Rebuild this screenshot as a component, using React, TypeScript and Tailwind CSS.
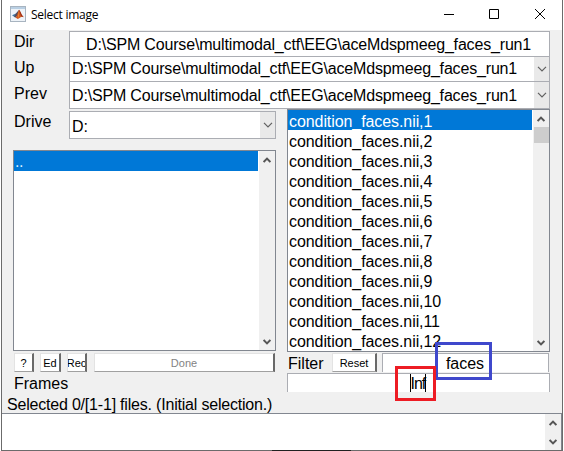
import type { ReactNode } from "react";

const path = "D:\\SPM Course\\multimodal_ctf\\EEG\\aceMdspmeeg_faces_run1";
const files = Array.from({ length: 12 }, (_, i) => `condition_faces.nii,${i + 1}`);

function ComboArrow() {
  return (
    <svg width="10" height="6" viewBox="0 0 10 6" className="block shrink-0">
      <path d="M1 .8 5 4.8 9 .8" fill="none" stroke="#606060" strokeWidth="1.2" />
    </svg>
  );
}

function ScrollArrow({ down = false }: { down?: boolean }) {
  return (
    <svg width="8" height="6" viewBox="0 0 8 6" className={`block shrink-0 ${down ? "rotate-180" : ""}`}>
      <path d="M.6 5 4 1.6 7.4 5" fill="none" stroke="#555" strokeWidth="2" />
    </svg>
  );
}

function Combo({ className, textClass, children }: { className: string; textClass: string; children: ReactNode }) {
  return (
    <div className={`flex border border-[#abadb3] bg-white ${className}`}>
      <div className={`min-w-0 flex-1 overflow-hidden whitespace-pre pl-[2px] tracking-[-0.17px] ${textClass}`}>{children}</div>
      <div className="flex w-[15px] items-center justify-center bg-[#e9e9e9]">
        <ComboArrow />
      </div>
    </div>
  );
}

function ScrollBar({ thumb = false }: { thumb?: boolean }) {
  return (
    <div className="flex w-4 shrink-0 flex-col items-center justify-between bg-[#f0f0f0] pt-[6px] pb-[5px]">
      <div className="flex w-full flex-col items-center gap-[5px]">
        <ScrollArrow />
        {thumb && <div className="h-4 w-[15px] bg-[#cdcdcd]" />}
      </div>
      <ScrollArrow down />
    </div>
  );
}

function Button({ className, children }: { className: string; children: ReactNode }) {
  return (
    <button
      className={`flex h-[19px] shrink-0 items-center justify-center overflow-hidden whitespace-nowrap border-t border-r-2 border-b border-l border-t-[#e3e3e3] border-r-[#696969] border-b-[#a0a0a0] border-l-[#e3e3e3] bg-white pt-px text-[11px] leading-none ${className}`}
    >
      {children}
    </button>
  );
}

function MatlabIcon() {
  return (
    <svg width="16" height="16" viewBox="0 0 16 16" className="block">
      <rect x=".5" y=".5" width="15" height="15" fill="#eef3f8" stroke="#a8b4c0" />
      <path d="M1 1h14v2H1z" fill="#b9cfe3" />
      <path d="M2 9.2 6 7.4 9 4 7.5 10 5.2 11.5z" fill="#3d79a8" />
      <path d="M6 7.4 9 4 8 9 5.2 11.5 4.2 10.4z" fill="#5b4a55" />
      <path d="M9 3.8C10.5 5 11.2 9 13.8 11.3 12 10.5 11 10.8 10 11.8L7.8 13 5.4 11.5C7.5 10.5 7.6 6.5 9 3.8z" fill="#d45b20" />
      <path d="M9 3.8C10.5 5 11.2 9 13.8 11.3L11 10.2z" fill="#9c2c18" />
      <path d="M9 5v5l-1 2z" fill="#f4a13a" />
    </svg>
  );
}

export default function App() {
  return (
    <div className="relative h-[451px] w-[564px] overflow-hidden bg-white pl-px font-['Liberation_Sans',Arial,sans-serif] text-[16px] leading-[20px] text-black">
      <div className="flex h-[451px] w-[562px] flex-col border-r border-b border-l border-[#6b6b6b] bg-[#f0f0f0]">
        <header className="flex h-[30px] shrink-0 bg-white">
          <div className="pt-[6px] pl-2">
            <MatlabIcon />
          </div>
          <div className="pt-[5px] pl-[5px] font-['Open_Sans','Noto_Sans',sans-serif] text-[12px] leading-[19px] tracking-[-0.25px]">Select image</div>
          <svg width="103" height="12" viewBox="0 0 103 12" className="mt-2 mr-[16px] ml-auto" fill="none" stroke="#000">
            <path d="M1 6.5h10M46.5 1.5h9v9h-9zM92 1l10 10M102 1 92 11" />
          </svg>
        </header>

        <div className="flex h-[77px] shrink-0 pt-px pl-3">
          <div className="w-[55px] shrink-0 pt-px">
            <div className="h-[26px]">Dir</div>
            <div className="h-[26px]">Up</div>
            <div className="h-[26px]">Prev</div>
          </div>
          <div className="w-[481px] shrink-0">
            <div className="h-[25px] whitespace-pre border border-b-0 border-[#abadb3] bg-white pt-[3px] pl-4 tracking-[-0.17px]">{path}</div>
            <Combo className="h-[25px] border-b-0" textClass="pt-[2px]">{path}</Combo>
            <Combo className="h-[28px]" textClass="pt-[4px]">{path}</Combo>
          </div>
        </div>

        <div className="flex h-[285px] shrink-0 pl-[11px]">
          <div className="w-[263px] shrink-0">
            <div className="flex h-[43px] pt-1 pl-px">
              <div className="w-[55px] pt-px">Drive</div>
              <Combo className="h-[28px] w-[207px]" textClass="pt-[5px]">D:</Combo>
            </div>
            <div className="flex h-[201px] border border-[#828790] bg-white">
              <div className="flex-1 bg-white">
                <div className="mr-px h-[20px] bg-[#0078d7] pt-px pl-px text-[#d9efff] tracking-[-0.4px]">..</div>
              </div>
              <ScrollBar />
            </div>
            <div className="mt-[2px] flex h-[19px] pl-px">
              <Button className="w-5">?</Button>
              <Button className="ml-[6px] w-[21px]">Ed</Button>
              <Button className="ml-[6px] w-[20px]">Rec</Button>
              <Button className="ml-[7px] w-[181px] text-[#838383]">Done</Button>
            </div>
            <div className="pt-[2px] pl-px">Frames</div>
          </div>
          <div className="ml-[11px] w-[263px] shrink-0 pt-[2px]">
            <div className="flex h-[243px] border border-[#828790] bg-white">
              <div className="h-[241px] flex-1 overflow-hidden">
                {files.map((file, i) => (
                  <div key={file} className={`mr-px h-5 whitespace-nowrap pt-[2px] pl-px tracking-[-0.08px] ${i === 0 ? "bg-[#0078d7] text-white" : ""}`}>
                    {file}
                  </div>
                ))}
              </div>
              <ScrollBar thumb />
            </div>
            <div className="mt-px flex h-[19px]">
              <div className="w-[45px] pt-px pl-px">Filter</div>
              <Button className="w-[45px]">Reset</Button>
              <div className="ml-[5px] h-[19px] w-[167px] border-t border-r border-l border-[#abadb3] bg-white pr-px text-center">faces</div>
            </div>
            <div className="mt-px h-[19px] border-t border-r border-l border-[#abadb3] bg-white pr-[2px] text-center">
              <span className="inline-block h-[18px] w-[16px] border-r border-l border-black text-center leading-[19px] tracking-[-1px]">Inf</span>
            </div>
          </div>
        </div>

        <div className="h-[21px] shrink-0 pt-[3px] pl-[5px] tracking-[-0.2px]">Selected 0/[1-1] files. (Initial selection.)</div>
        <div className="flex h-[37px] border-t border-r border-[#828790] bg-white">
          <div className="flex-1" />
          <ScrollBar />
        </div>
      </div>
      <div className="absolute top-[342px] left-[435px] h-[38px] w-[57px] border-3 border-[#3f48cc]" />
      <div className="absolute top-[366px] left-[395px] h-[35px] w-[41px] border-3 border-[#ed1c24]" />
      <div className="absolute top-[450px] left-[272px] h-px w-[79px] bg-[#202020]" />
    </div>
  );
}
